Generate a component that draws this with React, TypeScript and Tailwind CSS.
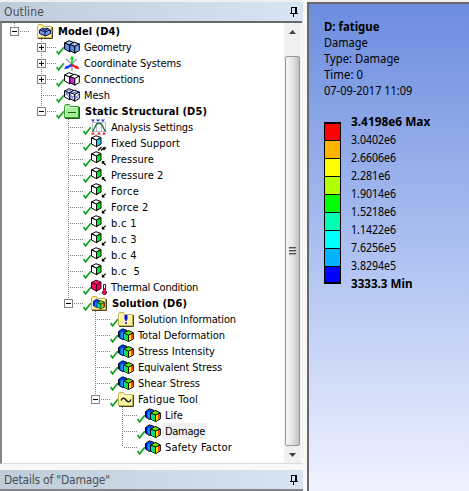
import { useLayoutEffect, useRef, useState } from "react";
import type { ReactNode } from "react";

/** Text whose letter spacing is adjusted so that it fills the given width. */
function Fit({ text, w }: { text: string; w: number }) {
  const ref = useRef<HTMLSpanElement>(null);
  const [gap, setGap] = useState(0);
  useLayoutEffect(() => {
    const el = ref.current;
    if (!el) return;
    const natural = el.getBoundingClientRect().width - gap * text.length;
    setGap((w - natural) / text.length);
  }, [text, w]);
  return (
    <span ref={ref} className="inline-block whitespace-pre" style={{ letterSpacing: gap }}>
      {text}
    </span>
  );
}

/** Text that is condensed horizontally to the given width. */
function Condensed({ text, w }: { text: string; w: number }) {
  const ref = useRef<HTMLSpanElement>(null);
  const [scale, setScale] = useState(1);
  useLayoutEffect(() => {
    if (ref.current) setScale(w / ref.current.offsetWidth);
  }, [text, w]);
  return (
    <span
      ref={ref}
      className="inline-block origin-left whitespace-pre"
      style={{ transform: `scaleX(${scale})` }}
    >
      {text}
    </span>
  );
}

type Cube = { top: string; left: string; right: string; line?: string };

function CubeShape({ x, y, top, left, right, line = "#000" }: Cube & { x: number; y: number }) {
  return (
    <g transform={`translate(${x} ${y})`} stroke={line} strokeWidth="1" strokeLinejoin="round">
      <path d="M.5 3 5 .7 10 2.5 5.5 5Z" fill={top} />
      <path d="M.5 3 5.5 5V11.7L.5 9Z" fill={left} />
      <path d="M10 2.5 5.5 5V11.7L10 9Z" fill={right} />
    </g>
  );
}

function Folder({ green = false }: { green?: boolean }) {
  return (
    <>
      <path
        d="M.5 14.5V3.5L1.5 1.5H5.5L6.5 3.5H14.5V14.5Z"
        fill={green ? "#a4f098" : "#fbf3a8"}
        stroke={green ? "#2f9e2f" : "#c4b24c"}
      />
      <path d="M1.5 13V4.5H13" fill="none" stroke={green ? "#d8ffd0" : "#fffbd8"} />
      <path d="M15.5 4V15.5H1" fill="none" stroke={green ? "#1d5c1d" : "#4a431a"} />
    </>
  );
}

function RainbowCubes() {
  return (
    <g transform="translate(0 1)">
      <path d="M.5 3.5 4.5 .8 9 2.5V10L4.5 11.5.5 9Z" fill="#0050f8" stroke="#000" />
      <path d="M1 4V8.7L2.5 9.6V4.5Z" fill="#0000e8" />
      <path d="M2.5 4.5V9.6L5.5 11V4Z" fill="#0098f8" />
      <path d="M1.5 3.4 4.5 1.4 7.5 2.4 5 4Z" fill="#1038e0" />
      <path d="M5.5 5 10.5 2.5 15.3 4.8V11L10.5 13.6 5.5 11Z" fill="#20e820" stroke="#000" />
      <path d="M6 5.5V10.8L8 11.9V6.3Z" fill="#00d8c0" />
      <path d="M8 6.3V11.9L10.2 13V7.3Z" fill="#20e800" />
      <path d="M10.8 7.3V13L13 11.8V6.2Z" fill="#ffe000" />
      <path d="M13 6.2V11.8L15 10.7V5.2Z" fill="#ff4800" />
      <path d="M7 5.1 10.5 3.4 14 4.9 10.5 6.6Z" fill="#50e800" />
      <path d="M11.5 3.9 14 4.9 12 5.9Z" fill="#ffc000" />
      <path d="M10.5 7V13M6 5.1 10.5 7.1 15 5" fill="none" stroke="#000" />
    </g>
  );
}

const white = { top: "#fff", left: "#fff", right: "#fff" };
const blue = { top: "#a8c4ff", left: "#5c8cec", right: "#79a5f8" };

const icons: Record<string, ReactNode> = {
  model: (
    <>
      <Folder />
      <path d="M2.5 7 6 5 8 6 10 5 13.5 7V10.5L8.5 13 2.5 10.5Z" fill="#6c9cf4" stroke="#10103c" />
      <path d="M3 7 8 9 13 7M8 9V13M5.5 6 8 7.5 10.5 6" fill="none" stroke="#10103c" />
    </>
  ),
  geometry: (
    <>
      <CubeShape x={0} y={1} {...blue} />
      <CubeShape x={5.3} y={2.5} {...blue} />
    </>
  ),
  coords: (
    <>
      <path d="M2 4 13 13M13 4 3 12M8 9V16" stroke="#a0a0a0" strokeWidth="1.5" />
      <path d="M8 2V10" stroke="#00c820" strokeWidth="1.4" />
      <path d="M5.8 4.5 8 .5 10.2 4.5Z" fill="#00d820" />
      <path d="M8 10 3 12.6" stroke="#1030ff" strokeWidth="2" />
      <path d="M0 14 2.5 10.3 4.5 13.5Z" fill="#1030ff" />
      <path d="M8 10 13 12.6" stroke="#f01020" strokeWidth="2" />
      <path d="M15.5 14 13 10.3 11 13.5Z" fill="#f01020" />
    </>
  ),
  connections: (
    <>
      <CubeShape x={0} y={1} {...white} right="#d820e8" />
      <CubeShape x={5.3} y={2.5} {...white} left="#d820e8" />
    </>
  ),
  mesh: (
    <>
      <CubeShape x={0} y={1} {...white} />
      <CubeShape x={5.3} y={2.5} {...white} />
      <path
        d="M1 4 5 10M1 8 5 6M3 3 7 4M6 7 10 13M6 11 10 9M11 9 15 12M11 12 15 7M8 5 13 6M13 4 9 6"
        stroke="#5068f0"
        strokeWidth=".9"
        fill="none"
      />
    </>
  ),
  green: (
    <>
      <Folder green />
      <path d="M4 9.5H12" stroke="#186018" />
    </>
  ),
  settings: (
    <>
      <path d="M1.5 3V13M14.5 3V13M5.5 3V13M10.5 3V13M1 3.5H15M1 12.5H15" stroke="#b8b8c4" fill="none" />
      <path d="M1 12.5C4 11 4 4.5 7 4.5H9C12 4.5 12 11 15 12.5" fill="none" stroke="#187048" strokeWidth="1.3" />
      <path d="M0 .5H4L2 3ZM5 .5H9L7 3ZM10 .5H14L12 3Z" fill="#2030d8" />
      <path d="M0 15.5 2 13 4 15.5ZM6 15.5 8 13 10 15.5ZM11 15.5 13 13 15 15.5Z" fill="#d81818" />
    </>
  ),
  fixed: (
    <>
      <CubeShape x={0} y={0} {...white} right="#20c8f8" />
      <path d="M7 15.5 10.5 12M10 15.5 13.5 12M12.5 15 15 12.5" stroke="#000" strokeWidth="1.2" />
    </>
  ),
  pressure: (
    <>
      <CubeShape x={0} y={0} {...white} right="#00e820" />
      <path d="M10.8 10H13.8L12.9 11.2 15 13.6 14.2 14.4 12 12.2 10.8 13.2Z" fill="#000" />
    </>
  ),
  force: (
    <>
      <CubeShape x={0} y={0} {...white} right="#00e820" />
      <path d="M10.8 14.4H14L12.9 13.2 15 11 14.2 10.2 12.1 12.3 10.8 11.2Z" fill="#000" />
    </>
  ),
  thermal: (
    <>
      <CubeShape x={0} y={0.5} top="#ff2070" left="#f80860" right="#e80058" line="#40001c" />
      <path d="M12.5 5.5H14.5V11.5L15.5 12.5V14.5L14.5 15.5H12.5L11.5 14.5V12.5L12.5 11.5Z" fill="#f01050" stroke="#581020" />
      <path d="M13.5 6V9" stroke="#fff" />
    </>
  ),
  solution: (
    <>
      <Folder />
      <g transform="translate(2 3) scale(.75)">
        <RainbowCubes />
      </g>
    </>
  ),
  info: (
    <>
      <Folder />
      <path d="M6.5 4H9.5V8L8.5 10H7.5L6.5 8ZM7.2 11H8.8V13H7.2Z" fill="#1010e8" />
    </>
  ),
  result: <RainbowCubes />,
  fatigue: (
    <>
      <Folder />
      <path d="M3 9.5C4.5 6.5 6 6.5 8 9S11.5 11.5 13 8.5" fill="none" stroke="#000" strokeWidth="1.3" />
    </>
  ),
};

type Item = {
  label: string;
  icon: string;
  depth: number;
  w: number;
  box?: "+" | "-";
  bold?: boolean;
  last?: boolean;
  selected?: boolean;
};

const items: Item[] = [
  { label: "Model (D4)", icon: "model", depth: 0, w: 62, box: "-", bold: true, last: true },
  { label: "Geometry", icon: "geometry", depth: 1, w: 47.5, box: "+" },
  { label: "Coordinate Systems", icon: "coords", depth: 1, w: 97, box: "+" },
  { label: "Connections", icon: "connections", depth: 1, w: 60, box: "+" },
  { label: "Mesh", icon: "mesh", depth: 1, w: 26 },
  { label: "Static Structural (D5)", icon: "green", depth: 1, w: 122, box: "-", bold: true, last: true },
  { label: "Analysis Settings", icon: "settings", depth: 2, w: 82 },
  { label: "Fixed Support", icon: "fixed", depth: 2, w: 69 },
  { label: "Pressure", icon: "pressure", depth: 2, w: 43 },
  { label: "Pressure 2", icon: "pressure", depth: 2, w: 52.5 },
  { label: "Force", icon: "force", depth: 2, w: 28 },
  { label: "Force 2", icon: "force", depth: 2, w: 37.5 },
  { label: "b.c 1", icon: "force", depth: 2, w: 26 },
  { label: "b.c 3", icon: "force", depth: 2, w: 26 },
  { label: "b.c 4", icon: "force", depth: 2, w: 26 },
  { label: "b.c  5", icon: "force", depth: 2, w: 29 },
  { label: "Thermal Condition", icon: "thermal", depth: 2, w: 87 },
  { label: "Solution (D6)", icon: "solution", depth: 2, w: 75, box: "-", bold: true, last: true },
  { label: "Solution Information", icon: "info", depth: 3, w: 98 },
  { label: "Total Deformation", icon: "result", depth: 3, w: 87 },
  { label: "Stress Intensity", icon: "result", depth: 3, w: 77 },
  { label: "Equivalent Stress", icon: "result", depth: 3, w: 84 },
  { label: "Shear Stress", icon: "result", depth: 3, w: 62 },
  { label: "Fatigue Tool", icon: "fatigue", depth: 3, w: 60, box: "-", last: true },
  { label: "Life", icon: "result", depth: 4, w: 18 },
  { label: "Damage", icon: "result", depth: 4, w: 40, selected: true },
  { label: "Safety Factor", icon: "result", depth: 4, w: 67, last: true },
];

const spacers = ["w-0", "w-[27px]", "w-[54px]", "w-[81px]", "w-[108px]"];

function Branch({ item }: { item: Item }) {
  return (
    <svg width="27" height="16" className="shrink-0" shapeRendering="crispEdges">
      <path d={`M12.5 0V${item.last ? 8 : 16}`} stroke="#808080" strokeDasharray="1 1" />
      <path d={`M${item.box ? 18 : 14} 8.5H27`} stroke="#808080" strokeDasharray="1 1" />
      {item.box && (
        <>
          <rect x="8.5" y="4.5" width="8" height="8" fill="#fff" stroke="#808080" />
          <path d={item.box === "+" ? "M10 8.5H15M12.5 6V11" : "M10 8.5H15"} stroke="#000" />
        </>
      )}
    </svg>
  );
}

function TreeRow({ item }: { item: Item }) {
  return (
    <div className="flex h-4 items-center">
      <div className={`shrink-0 ${spacers[item.depth]}`} />
      <Branch item={item} />
      <svg width="8" height="16" className="shrink-0 overflow-visible">
        {item.depth > 0 && <path d="M.6 12 2.6 14.8 7.8 8.2" fill="none" stroke="#10a018" strokeWidth="1.6" />}
      </svg>
      <svg width="16" height="16" className="shrink-0 overflow-visible" fill="none">
        {icons[item.icon]}
      </svg>
      <div
        className={`ml-px flex h-4 items-center pr-0.5 pt-0.5 text-[11px] leading-4 text-black ${
          item.bold ? "pl-1 font-bold" : "pl-[3px]"
        } ${item.selected ? "bg-[#f0f0f0]" : ""}`}
      >
        <Fit text={item.label} w={item.w} />
      </div>
    </div>
  );
}

function PanelHeader({ title, w }: { title: string; w: number }) {
  return (
    <div className="flex h-[19px] items-center justify-between bg-linear-to-r from-[#bfcddb] to-[#d7e4f2] pl-1 pr-[5px] text-xs leading-none text-[#4a5056]">
      <Fit text={title} w={w} />
      <svg width="8" height="10" shapeRendering="crispEdges" fill="none" stroke="#000">
        <path d="M1.5 6V.5H6M0 6.5H8M3.5 7V10" />
        <path d="M5.5 0V6" strokeWidth="2" />
      </svg>
    </div>
  );
}

function Scrollbar() {
  return (
    <div className="flex w-[17px] flex-col items-center bg-[#f0f0f0]">
      <div className="flex h-[33px] items-start pt-[7px]">
        <svg width="7" height="4">
          <path d="M0 4 3.5 0 7 4Z" fill="#404040" />
        </svg>
      </div>
      <div className="flex w-[15px] grow flex-col items-center justify-center gap-px rounded-[2px] border border-[#969696] bg-linear-to-r from-[#f6f6f6] via-[#e4e4e6] to-[#bebec4]">
        <div className="h-0.5 w-[7px] border-t border-[#505050] bg-[#aaa]" />
        <div className="h-0.5 w-[7px] border-t border-[#505050] bg-[#aaa]" />
        <div className="h-0.5 w-[7px] border-t border-[#505050] bg-[#aaa]" />
      </div>
      <div className="flex h-[17px] items-center">
        <svg width="7" height="4">
          <path d="M0 0H7L3.5 4Z" fill="#404040" />
        </svg>
      </div>
    </div>
  );
}

const bands = [
  "bg-[#ff0000]",
  "bg-[#ffb200]",
  "bg-[#ffff00]",
  "bg-[#b2ff00]",
  "bg-[#00ff00]",
  "bg-[#00ffb2]",
  "bg-[#00ffff]",
  "bg-[#00b2ff]",
  "bg-[#0000ff]",
];

const values: [string, number][] = [
  ["3.4198e6 Max", 79],
  ["3.0402e6", 45],
  ["2.6606e6", 45],
  ["2.281e6", 39],
  ["1.9014e6", 45],
  ["1.5218e6", 45],
  ["1.1422e6", 45],
  ["7.6256e5", 45],
  ["3.8294e5", 45],
  ["3333.3 Min", 62],
];

const caption: [string, number][] = [
  ["D: fatigue", 55],
  ["Damage", 44],
  ["Type: Damage", 76],
  ["Time: 0", 39],
  ["07-09-2017 11:09", 88],
];

export default function App() {
  return (
    <div className="flex h-[491px] w-[469px] overflow-hidden bg-[#f0f0f0] font-['DejaVu_Sans_Condensed','DejaVu_Sans',sans-serif]">
      <div className="flex w-[303px] shrink-0 flex-col pt-0.5">
        <PanelHeader title="Outline" w={40} />
        <div className="flex h-[443px] w-[302px] border-b border-l-2 border-t-2 border-b-[#dcdcdc] border-l-[#858585] border-t-[#696969] bg-white">
          <div className="-ml-px w-[283px] pl-px">
            {items.map((item, i) => (
              <TreeRow key={i} item={item} />
            ))}
          </div>
          <Scrollbar />
        </div>
        <div className="h-[6px] bg-[#f8f8f8]" />
        <PanelHeader title={'Details of "Damage"'} w={106} />
        <div className="h-0.5 bg-[#858585]" />
      </div>
      <div className="w-1 shrink-0 bg-[#f8f8f8]" />
      <div className="mt-0.5 flex grow flex-col border-l-2 border-t-2 border-[#696969] bg-linear-to-b from-[#6c8cde] to-[#f0f3ff] pl-[15px] pt-[15px] text-xs text-black">
        <div className="flex flex-col font-['Noto_Sans','Open_Sans',sans-serif]">
          {caption.map(([text, w], i) => (
            <div key={i} className={`flex h-4 items-center leading-4 ${i === 0 ? "font-bold" : ""}`}>
              <Condensed text={text} w={w} />
            </div>
          ))}
        </div>
        <div className="mt-[14px] flex font-['Noto_Sans','Open_Sans',sans-serif]">
          <div className="mt-[9px] h-[162px] w-[17px] overflow-hidden border-x border-b-2 border-black">
            {bands.map((color, i) => (
              <div key={i} className={`h-[18px] border-black ${i === 0 ? "border-t-2" : "border-t"} ${color}`} />
            ))}
          </div>
          <div className="ml-[10px]">
            {values.map(([text, w], i) => (
              <div key={i} className={`flex h-[18px] items-center leading-4 ${i % 9 === 0 ? "font-bold" : ""}`}>
                <Condensed text={text} w={w} />
              </div>
            ))}
          </div>
        </div>
      </div>
    </div>
  );
}
